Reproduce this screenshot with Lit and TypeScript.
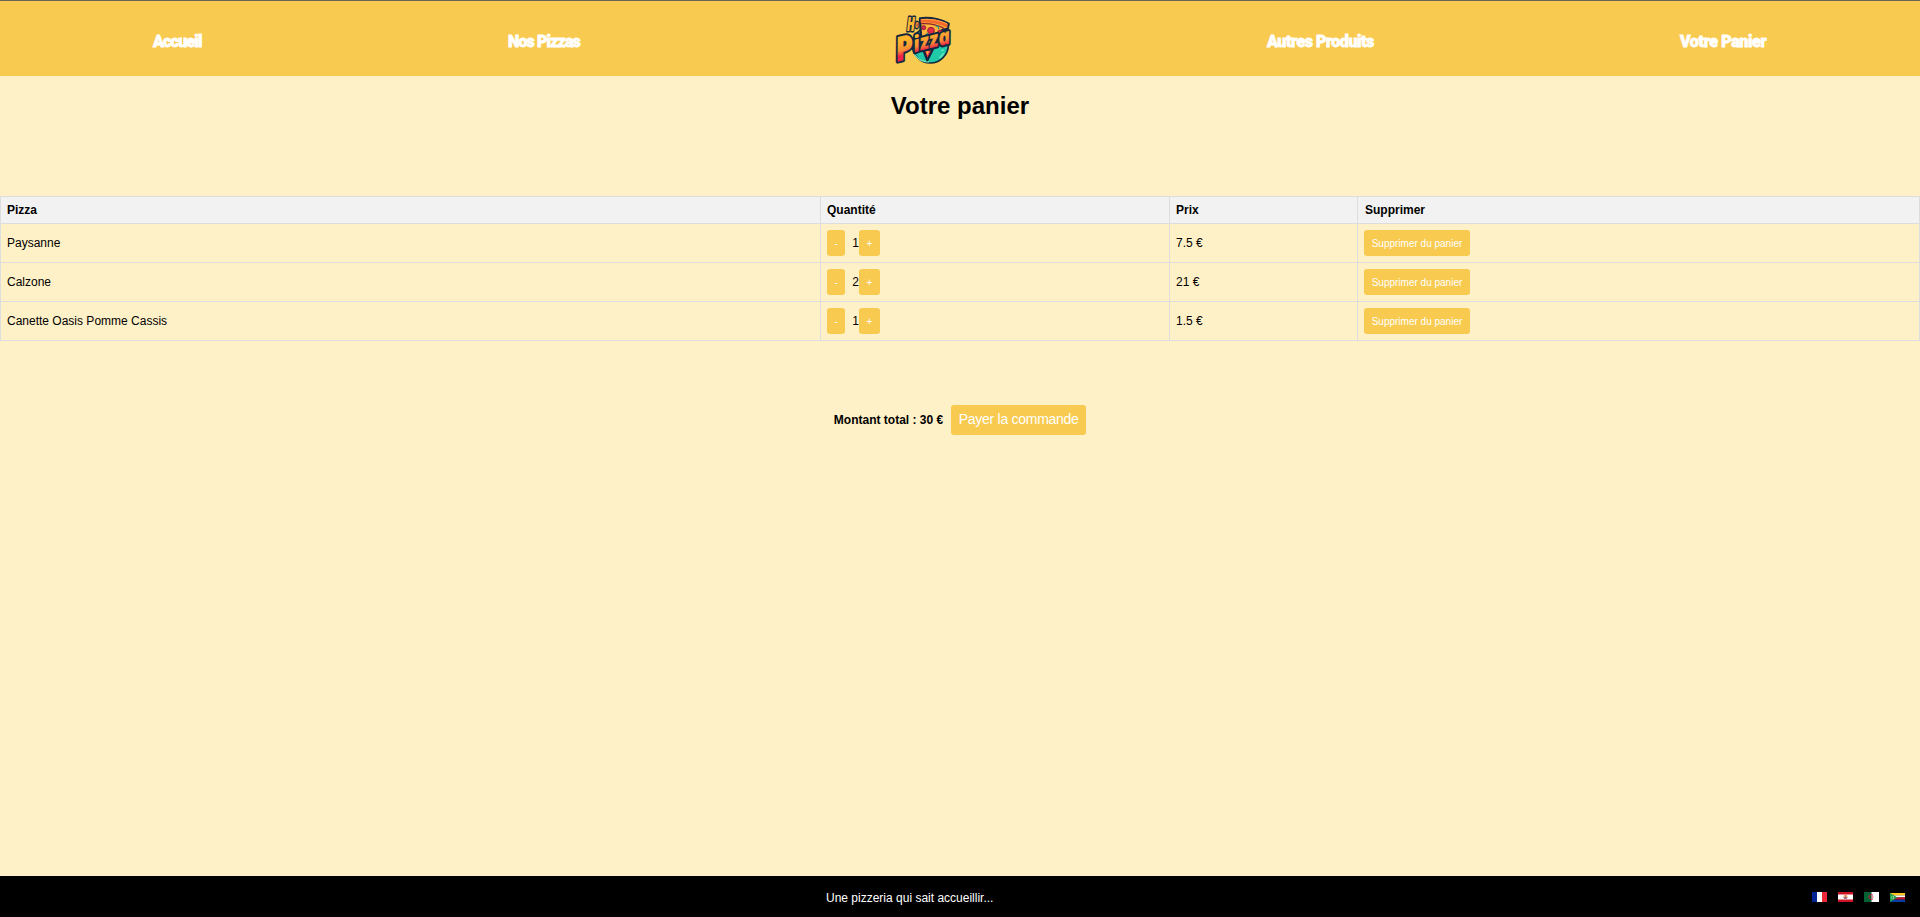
import { LitElement, html, svg, css } from "lit";
import { customElement, state } from "lit/decorators.js";

interface Line { name: string; qty: number; price: string }

@customElement("pizza-logo")
class PizzaLogo extends LitElement {
  static styles = css`
    :host { display: block; width: 75px; height: 74px; }
    svg { display: block; width: 75px; height: 74px; }
    .word { font-family: "Open Sans", "Noto Sans", sans-serif; font-weight: 800; font-style: italic; paint-order: stroke; stroke-linejoin: round; }
  `;
  render() {
    return html`<svg viewBox="18 3 225 222">
      <defs>
        <linearGradient id="g" x1="0" y1="0" x2="0" y2="1">
          <stop offset="0.35" stop-color="#ffb62b" /><stop offset="0.56" stop-color="#f98e35" /><stop offset="0.68" stop-color="#ee2347" />
        </linearGradient>
      </defs>
      <circle cx="151" cy="132" r="54" fill="#20c9a8" stroke="#13283f" stroke-width="5" />
      <path d="M103 160q16 22 43 23M178 171l14-14M184 150l7-4M112 149l10 8" stroke="#6ce8bc" stroke-width="4" fill="none" />
      <path d="M120 52q45-5 86 16l-3 16-16 3-45 91-18-47z" fill="#ffb43b" stroke="#13283f" stroke-width="7" stroke-linejoin="round" />
      <path d="M122 54q44-5 81 14l-1 12q-38-17-80-15z" fill="#f26b2b" />
      <path d="M124 56q42-4 77 12" fill="none" stroke="#ff9f48" stroke-width="3" />
      <path d="M124 68q40-2 68 14" fill="none" stroke="#8e2332" stroke-width="4" />
      <g fill="#e62b45" stroke="#86233a" stroke-width="3">
        <circle cx="153" cy="89" r="10" /><circle cx="131" cy="80" r="6" /><circle cx="181" cy="95" r="8" />
      </g>
      <path d="M167 75q12-1 8 10M137 103l7-7M164 100l5 3" stroke="#278e77" stroke-width="4" fill="none" />
      <path d="M132 148l25-2-15 29z" fill="#ed2946" stroke="#13283f" stroke-width="4" />
      <path d="M138 151l10 0-6 12z" fill="#ffb137" />
      <g transform="translate(80 91) scale(0.6 1)">
        <text class="word" font-size="58" fill="#fdb62f" stroke="#13283f" stroke-width="9">H<tspan font-size="30" dy="-9" fill="#f58b2e">o</tspan></text>
      </g>
      <g transform="translate(51 182) rotate(-14) skewX(-4) scale(0.78 1)">
        <text class="word" font-size="100" textLength="218" lengthAdjust="spacingAndGlyphs" fill="url(#g)" stroke="#13283f" stroke-width="12">P<tspan font-size="66" dy="-15">izza</tspan></text>
      </g>
    </svg>`;
  }
}

@customElement("app-root")
class AppRoot extends LitElement {
  @state() lines: Line[] = [
    { name: "Paysanne", qty: 1, price: "7.5 €" },
    { name: "Calzone", qty: 2, price: "21 €" },
    { name: "Canette Oasis Pomme Cassis", qty: 1, price: "1.5 €" },
  ];

  static styles = css`
    :host { display: flex; flex-direction: column; height: 917px; box-sizing: border-box; background: #fff1c7; border-top: 1px solid #6b6658; font: 12px/14px "Liberation Sans", Arial, sans-serif; color: #000; overflow: hidden; }
    nav { display: grid; grid-template-columns: 355px 378px 381px 413px 1fr; padding-left: 153px; height: 75px; background: #f8ca4f; align-items: center; flex: none; }
    nav a { font: 900 16px/20px Roboto, sans-serif; color: #fff; -webkit-text-stroke: 0.8px #fff; white-space: nowrap; padding-top: 7px; }
    .home { letter-spacing: -0.8px; }
    .pizzas { letter-spacing: -0.85px; }
    .others { letter-spacing: -0.45px; }
    .cart { letter-spacing: -0.35px; }
    h1 { margin: 15px 0 0; font-size: 24px; line-height: 30px; text-align: center; flex: none; }
    table { margin-top: 75px; width: 1920px; border-collapse: collapse; table-layout: fixed; flex: none; }
    th, td { border: 1px solid #ddd; padding: 6px; text-align: left; box-sizing: border-box; }
    th { background: #f2f2f2; height: 27px; }
    th:last-child { padding-left: 7px; }
    td { height: 39px; }
    .c1 { width: 820px; } .c2 { width: 349px; } .c3 { width: 188px; }
    .qty { display: flex; align-items: center; height: 26px; }
    button { display: block; box-sizing: border-box; height: 26px; margin: 0; padding: 2px 0 0; border: 0; border-radius: 3px; background: #f8ca4f; color: #fff; font: 10px/12px "Liberation Sans", Arial, sans-serif; text-align: center; }
    .minus { width: 18px; } .plus { width: 21px; }
    .num { width: 14px; text-align: right; }
    .delete { width: 106px; }
    .total { display: flex; justify-content: center; align-items: center; gap: 8px; margin-top: 64px; font-weight: bold; flex: none; }
    .pay { width: 135px; height: 30px; font-size: 14px; line-height: 16px; letter-spacing: -0.27px; padding: 0 0 2px; }
    footer { box-sizing: border-box; margin-top: auto; height: 41px; background: #000; color: #fff; display: flex; align-items: center; padding: 2px 15px 0 826px; flex: none; }
    .flags { display: flex; gap: 11px; margin: 0 0 1px auto; }
    .flags svg { width: 15px; height: 10px; display: block; }
  `;

  render() {
    return html`
      <nav>
        <a class="home">Accueil</a><a class="pizzas">Nos Pizzas</a><pizza-logo></pizza-logo><a class="others">Autres Produits</a><a class="cart">Votre Panier</a>
      </nav>
      <h1>Votre panier</h1>
      <table>
        <colgroup><col class="c1" /><col class="c2" /><col class="c3" /><col /></colgroup>
        <thead><tr><th>Pizza</th><th>Quantité</th><th>Prix</th><th>Supprimer</th></tr></thead>
        <tbody>${this.lines.map((l) => html`<tr>
          <td>${l.name}</td>
          <td><div class="qty"><button class="minus">-</button><span class="num">${l.qty}</span><button class="plus">+</button></div></td>
          <td>${l.price}</td>
          <td><button class="delete">Supprimer du panier</button></td>
        </tr>`)}</tbody>
      </table>
      <div class="total"><span>Montant total : 30 €</span><button class="pay">Payer la commande</button></div>
      <footer>
        <span>Une pizzeria qui sait accueillir...</span>
        <div class="flags">${this.flags().map((f) => html`<svg viewBox="0 0 15 10">${f}</svg>`)}</div>
      </footer>`;
  }

  flags() {
    return [
      svg`<path fill="#fff" d="M0 0h15v10H0z"/><path fill="#002395" d="M0 0h5v10H0z"/><path fill="#ed2939" d="M10 0h5v10h-5z"/>`,
      svg`<path fill="#fff" d="M0 0h15v10H0z"/><path fill="#ce1126" d="M0 0h15v2.6H0zM0 7.4h15V10H0z"/><circle cx="7.5" cy="5" r="2.2" fill="#efb27b"/><path fill="#7568a2" d="M5.5 5.2h4l-.7 1.6H6.2z"/><path stroke="#d54b4b" stroke-width=".6" d="M7.5 3v3"/>`,
      svg`<path fill="#fff" d="M0 0h15v10H0z"/><path fill="#006233" d="M0 0h7.5v10H0z"/><path fill="none" stroke="#d21034" stroke-width="1" d="M9 3.2a2.4 2.4 0 1 0 0 3.6"/><path fill="#d21034" d="M7.3 4.4l1 .3.9-.7v2l-.9-.7-1 .3z"/>`,
      svg`<path fill="#ffc61e" d="M0 1h15v2.5H0z"/><path fill="#fff" d="M0 3.4h15v2H0z"/><path fill="#ce1126" d="M0 5.4h15v2.3H0z"/><path fill="#003da5" d="M0 7.6h15V10H0z"/><path fill="#239e46" d="M0 1l7.5 4.5L0 10z"/><path fill="none" stroke="#b5dfba" stroke-width=".7" d="M2.5 3.8q-2 1.7 0 3.4M3.6 4v3"/>`,
    ];
  }
}
